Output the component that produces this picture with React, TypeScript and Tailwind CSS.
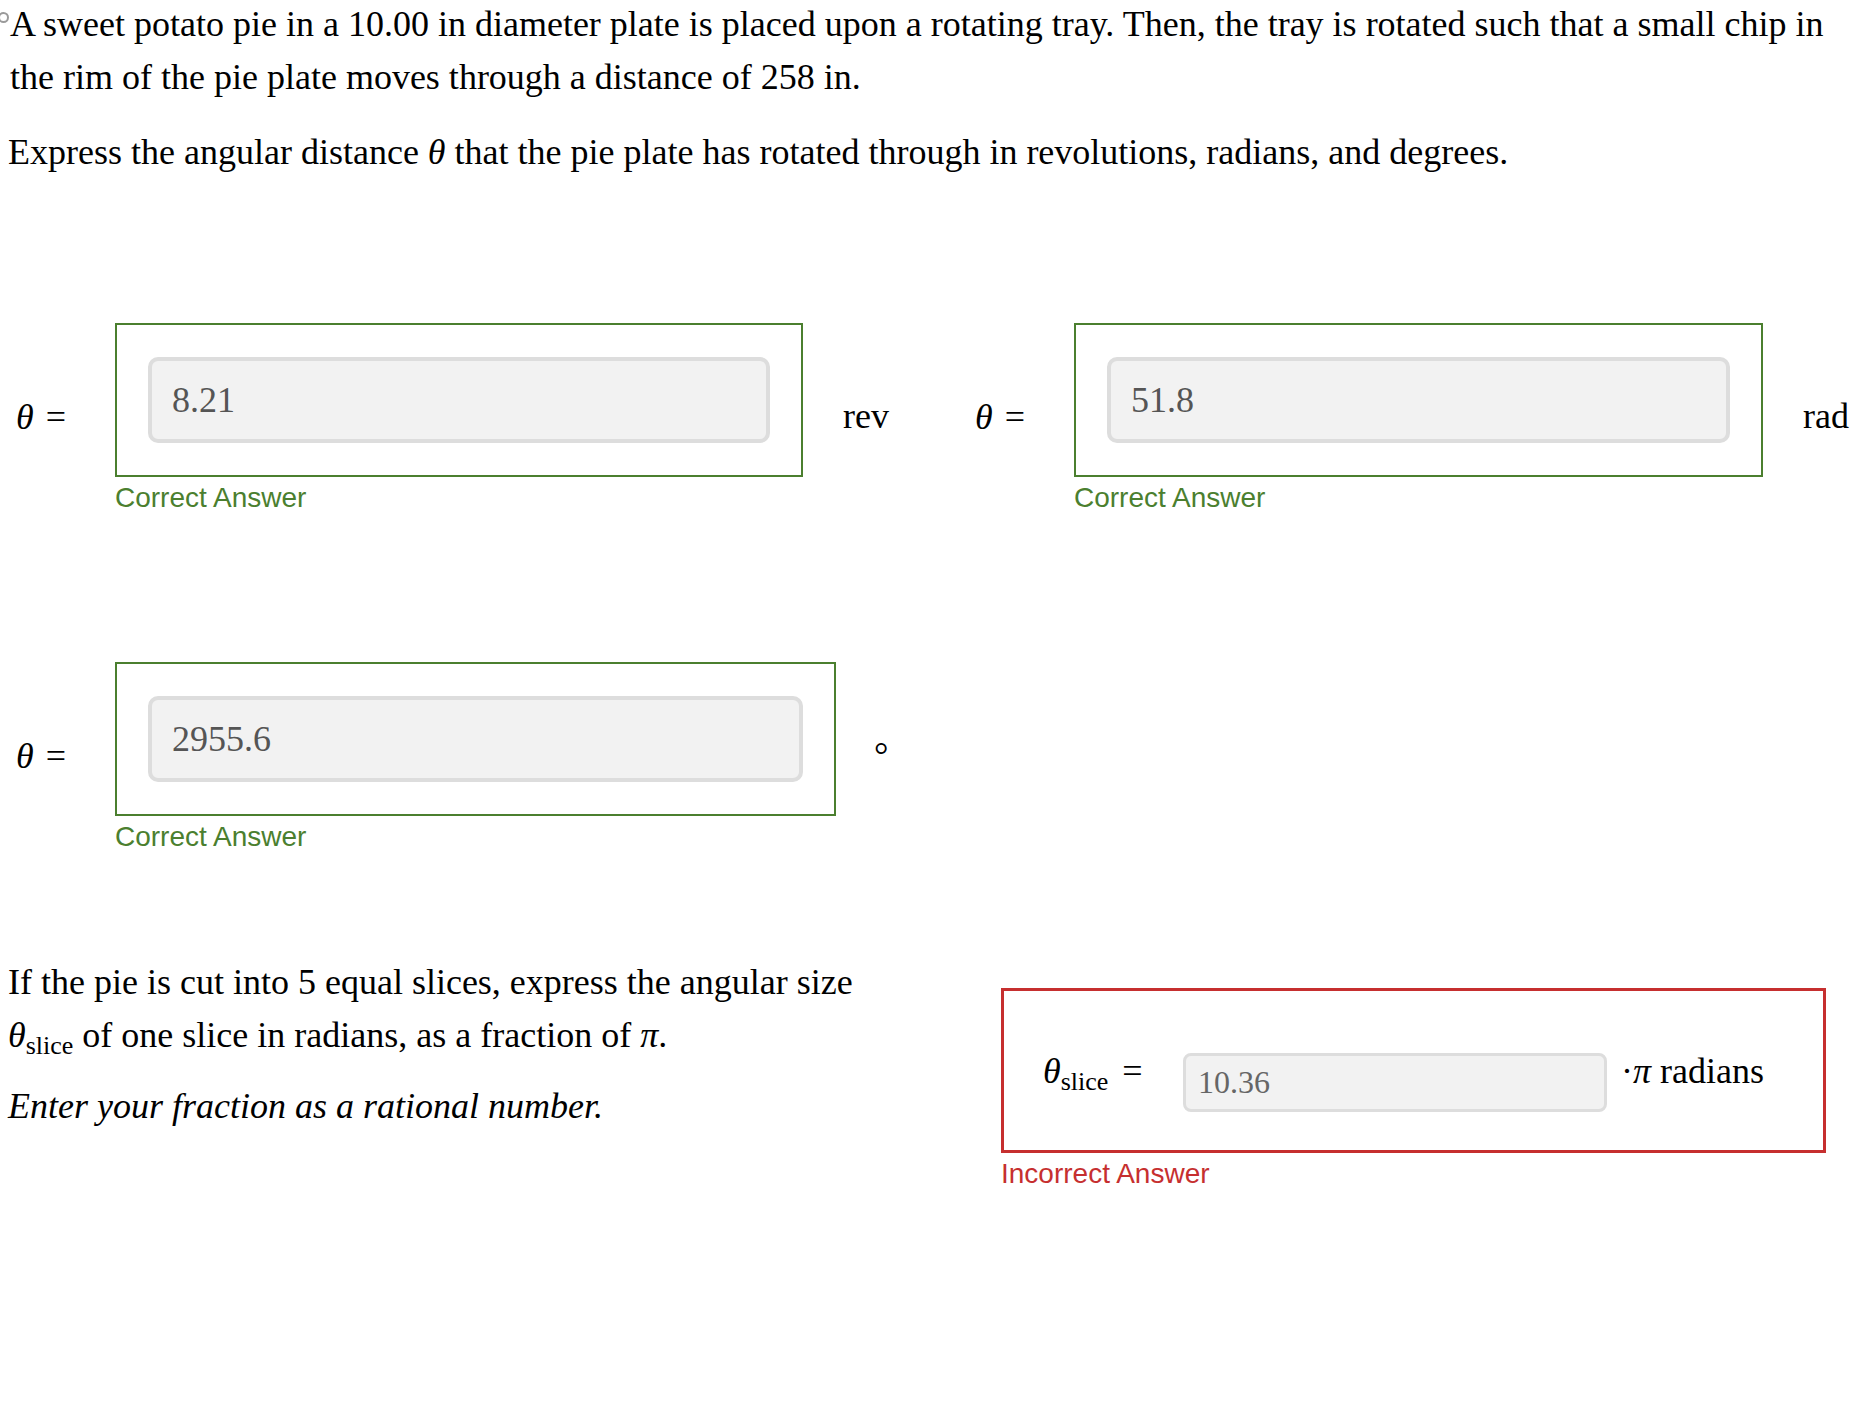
import React from 'react';

const serif = "font-['Liberation_Serif','Times_New_Roman',serif]";
const sans = "font-['Liberation_Sans',Arial,sans-serif]";

function AnswerInput({ value, width }: { value: string; width: string }) {
  return (
    <input
      readOnly
      value={value}
      className={`${serif} ${width} h-[86px] rounded-[10px] border-4 border-[#dddddd] bg-[#f2f2f2] pl-[20px] text-[36px] text-[#555555] outline-none`}
    />
  );
}

function Theta() {
  return (
    <span className="whitespace-nowrap">
      <i>θ</i> <span className="ml-[3px]">=</span>
    </span>
  );
}

interface FieldProps {
  value: string;
  unit: string;
  boxWidth: string;
  inputWidth: string;
  unitMargin: string;
}

function CorrectField({ value, unit, boxWidth, inputWidth, unitMargin }: FieldProps) {
  return (
    <div className="flex items-start">
      <div className="mt-[68px] w-[115px] shrink-0 pl-[16px]">
        <Theta />
      </div>
      <div className="flex flex-col">
        <div className={`${boxWidth} border-2 border-[#4b7f2f] px-[31px] py-[32px]`}>
          <AnswerInput value={value} width={inputWidth} />
        </div>
        <div className={`${sans} mt-[5px] text-[28px] leading-[32px] text-[#4b7f2f]`}>Correct Answer</div>
      </div>
      <div className={`mt-[67px] ${unitMargin}`}>{unit}</div>
    </div>
  );
}

export default function App() {
  return (
    <div className={`${serif} relative min-h-screen w-full bg-white text-[36px] leading-[53px] text-black`}>
      <span className="absolute left-[-2px] top-[14px] h-[11px] w-[11px] rounded-full border-2 border-[#9a9a9a]" />

      <div className="pl-[8px] pr-[20px]">
        <p className="mt-[-2px] pl-[2px]">
          A sweet potato pie in a 10.00 in diameter plate is placed upon a rotating tray. Then, the tray is rotated such
          that a small chip in the rim of the pie plate moves through a distance of 258 in.
        </p>
        <p className="mt-[22px]">
          Express the angular distance <i>θ</i> that the pie plate has rotated through in revolutions, radians, and
          degrees.
        </p>
      </div>

      <div className="mt-[144px] flex items-start">
        <div className="w-[959px] shrink-0">
          <CorrectField value="8.21" unit="rev" boxWidth="w-[688px]" inputWidth="w-[622px]" unitMargin="ml-[40px]" />
        </div>
        <CorrectField value="51.8" unit="rad" boxWidth="w-[689px]" inputWidth="w-[623px]" unitMargin="ml-[40px]" />
      </div>

      <div className="mt-[148px]">
        <CorrectField value="2955.6" unit="°" boxWidth="w-[721px]" inputWidth="w-[655px]" unitMargin="ml-[38px]" />
      </div>

      <div className="mt-[103px] flex items-start">
        <div className="w-[1001px] shrink-0">
          <p className="w-[870px] pl-[8px]">
            If the pie is cut into 5 equal slices, express the angular size <i>θ</i>
            <span className="relative top-[7px] text-[26px] leading-none">slice</span> of one slice in radians, as a
            fraction of <i>π</i>.
          </p>
          <p className="mt-[18px] pl-[8px] italic">Enter your fraction as a rational number.</p>
        </div>

        <div className="mt-[32px] flex flex-col">
          <div className="w-[825px] border-[3px] border-[#c62f2f] pb-[38px] pl-[39px] pt-[62px]">
            <div className="flex items-start">
              <div className="w-[140px] shrink-0 leading-[36px]">
                <i>θ</i>
                <span className="relative top-[7px] text-[26px] leading-none">slice</span>
                <span className="ml-[14px]">=</span>
              </div>
              <input
                readOnly
                value="10.36"
                className={`${serif} h-[59px] w-[424px] rounded-[8px] border-[3px] border-[#dddddd] bg-[#f2f2f2] pl-[12px] text-[32px] text-[#666666] outline-none`}
              />
              <div className="ml-[14px] leading-[36px]">
                ·<i>π</i> radians
              </div>
            </div>
          </div>
          <div className={`${sans} mt-[5px] text-[28px] leading-[32px] text-[#c62f2f]`}>Incorrect Answer</div>
        </div>
      </div>
    </div>
  );
}
